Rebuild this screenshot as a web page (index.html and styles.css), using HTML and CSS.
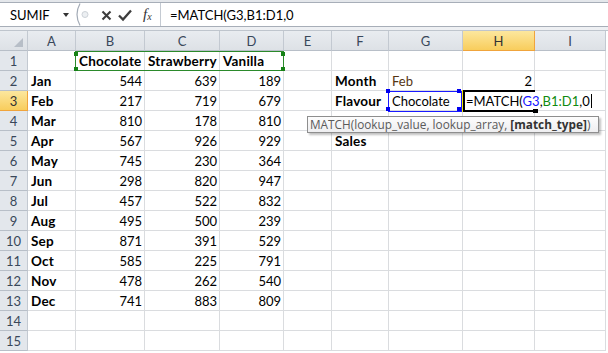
FILE: index.html
```html
<!DOCTYPE html>
<html lang="en">
<head>
  <meta charset="UTF-8" />
  <title>MATCH</title>
  <link rel="stylesheet" href="styles.css">
</head>
<body>
  <!-- Formula bar -->
  <div class="top">
    <div class="fbar">
      <div class="namebox">SUMIF<span class="dd"></span></div>
      <svg class="fbtns" width="86" height="23" viewBox="0 0 86 23">
        <path d="M6 0.5 Q0 11.5 6 22.5" fill="none" stroke="#a3abb6" stroke-width="1.2"></path>
        <circle cx="11" cy="11.5" r="3" fill="#eceff2" stroke="#cdd2d8"></circle>
        <path d="M28.5 8.5 L36.5 16.5 M36.5 8.5 L28.5 16.5" stroke="#3d3d3d" stroke-width="2.1" fill="none"></path>
        <path d="M45 12.5 L49 16.5 L57 7.5" stroke="#3d3d3d" stroke-width="2.3" fill="none"></path>
        <text x="69" y="16" class="fx">f<tspan class="fxs" dy="1">x</tspan></text>
      </svg>
      <div class="finput">=MATCH(G3,B1:D1,0</div>
    </div>
    <div class="gap"></div>
  </div>

  <!-- Sheet -->
  <div class="sheet">
    <div class="corner"></div>
    <div class="hd">A</div><div class="hd">B</div><div class="hd">C</div><div class="hd">D</div><div class="hd">E</div><div class="hd">F</div><div class="hd">G</div><div class="hd sel">H</div><div class="hd">I</div>

    <div class="rh">1</div><div class="c"></div><div class="c b">Chocolate</div><div class="c b">Strawberry</div><div class="c b">Vanilla</div><div class="c"></div><div class="c"></div><div class="c"></div><div class="c"></div><div class="c"></div>
    <div class="rh">2</div><div class="c b">Jan</div><div class="c n">544</div><div class="c n">639</div><div class="c n">189</div><div class="c"></div><div class="c b">Month</div><div class="c brown">Feb</div><div class="c n">2</div><div class="c"></div>
    <div class="rh sel">3</div><div class="c b">Feb</div><div class="c n">217</div><div class="c n">719</div><div class="c n">679</div><div class="c"></div><div class="c b">Flavour</div><div class="c">Chocolate</div><div class="c"></div><div class="c"></div>
    <div class="rh">4</div><div class="c b">Mar</div><div class="c n">810</div><div class="c n">178</div><div class="c n">810</div><div class="c"></div><div class="c"></div><div class="c"></div><div class="c"></div><div class="c"></div>
    <div class="rh">5</div><div class="c b">Apr</div><div class="c n">567</div><div class="c n">926</div><div class="c n">929</div><div class="c"></div><div class="c b">Sales</div><div class="c"></div><div class="c"></div><div class="c"></div>
    <div class="rh">6</div><div class="c b">May</div><div class="c n">745</div><div class="c n">230</div><div class="c n">364</div><div class="c"></div><div class="c"></div><div class="c"></div><div class="c"></div><div class="c"></div>
    <div class="rh">7</div><div class="c b">Jun</div><div class="c n">298</div><div class="c n">820</div><div class="c n">947</div><div class="c"></div><div class="c"></div><div class="c"></div><div class="c"></div><div class="c"></div>
    <div class="rh">8</div><div class="c b">Jul</div><div class="c n">457</div><div class="c n">522</div><div class="c n">832</div><div class="c"></div><div class="c"></div><div class="c"></div><div class="c"></div><div class="c"></div>
    <div class="rh">9</div><div class="c b">Aug</div><div class="c n">495</div><div class="c n">500</div><div class="c n">239</div><div class="c"></div><div class="c"></div><div class="c"></div><div class="c"></div><div class="c"></div>
    <div class="rh">10</div><div class="c b">Sep</div><div class="c n">871</div><div class="c n">391</div><div class="c n">529</div><div class="c"></div><div class="c"></div><div class="c"></div><div class="c"></div><div class="c"></div>
    <div class="rh">11</div><div class="c b">Oct</div><div class="c n">585</div><div class="c n">225</div><div class="c n">791</div><div class="c"></div><div class="c"></div><div class="c"></div><div class="c"></div><div class="c"></div>
    <div class="rh">12</div><div class="c b">Nov</div><div class="c n">478</div><div class="c n">262</div><div class="c n">540</div><div class="c"></div><div class="c"></div><div class="c"></div><div class="c"></div><div class="c"></div>
    <div class="rh">13</div><div class="c b">Dec</div><div class="c n">741</div><div class="c n">883</div><div class="c n">809</div><div class="c"></div><div class="c"></div><div class="c"></div><div class="c"></div><div class="c"></div>
    <div class="rh">14</div><div class="c"></div><div class="c"></div><div class="c"></div><div class="c"></div><div class="c"></div><div class="c"></div><div class="c"></div><div class="c"></div><div class="c"></div>
    <div class="rh">15</div><div class="c"></div><div class="c"></div><div class="c"></div><div class="c"></div><div class="c"></div><div class="c"></div><div class="c"></div><div class="c"></div><div class="c"></div>

    <!-- Range highlights and editing cell -->
    <div class="range green"></div>
    <div class="range blue"></div>
    <div class="edit">
      <span class="edit-text">=MATCH(<span class="ref-blue">G3</span>,<span class="ref-green">B1:D1</span>,0<span class="caret"></span></span>
    </div>

    <!-- Function tooltip -->
    <div class="tip">MATCH(lookup_value, lookup_array, <b>[match_type]</b>)</div>
  </div>
</body>
</html>
```

FILE: styles.css
```css
* {
  box-sizing: border-box;
}

body {
  margin: 0;
  width: 608px;
  height: 353px;
  overflow: hidden;
  background: #fff;
  font-family: Lato, "Liberation Sans", sans-serif;
  font-size: 13px;
  color: #000;
}

/* Formula bar */
.top {
  padding-top: 2px;
  background: #e4e7eb;
}

.fbar {
  display: flex;
  height: 25px;
  background: #fff;
  border-top: 1px solid #a7aeb8;
  border-bottom: 1px solid #a7aeb8;
}

.namebox {
  position: relative;
  width: 74px;
  padding-left: 10px;
  line-height: 23px;
  padding-top: 1px;
}

.dd {
  position: absolute;
  left: 63px;
  top: 10px;
  border-left: 3.5px solid transparent;
  border-right: 3.5px solid transparent;
  border-top: 4px solid #333;
}

.fbtns {
  flex: none;
}

.fx {
  font-family: "Liberation Serif", serif;
  font-style: italic;
  font-size: 15px;
  fill: #333;
}

.fxs {
  font-size: 10px;
}

.finput {
  flex: 1;
  border-left: 1px solid #c4cad2;
  padding-left: 9px;
  padding-top: 1px;
  line-height: 23px;
}

.gap {
  height: 4px;
  background: #eef0f3;
  border-bottom: 1px solid #bfc5cd;
}

/* Sheet grid */
.sheet {
  position: relative;
  display: grid;
  grid-template-columns: 28px 48px 69px 75px 64px 48px 57px 74px 72px 71px;
  grid-auto-rows: 20px;
}

.corner,
.hd,
.rh {
  background: linear-gradient(#e9ecf0, #dde1e6);
  border-right: 1px solid #c3c9d1;
  border-bottom: 1px solid #b8bfc8;
  color: #39475a;
  text-align: center;
  line-height: 21px;
}

.rh {
  background: #e3e7ec;
  line-height: 20px;
}

.corner {
  position: relative;
}

.corner::after {
  content: "";
  position: absolute;
  right: 4px;
  bottom: 3px;
  border-left: 9px solid transparent;
  border-bottom: 9px solid #b7bec7;
}

.hd.sel,
.rh.sel {
  background: linear-gradient(#fce79e, #f8cd5c);
  border-right-color: #f0a43c;
  border-bottom-color: #f0a43c;
  color: #333;
}

.c {
  border-right: 1px solid #dadcdf;
  border-bottom: 1px solid #dadcdf;
  padding: 0 2px 0 3px;
  line-height: 20px;
  white-space: nowrap;
}

.b {
  font-weight: bold;
  font-size: 13.5px;
  letter-spacing: 0.2px;
}

.n {
  text-align: right;
}

.brown {
  color: #553513;
}

/* Reference outlines */
.range {
  position: absolute;
  border: 1px solid;
}

.range::before {
  content: "";
  position: absolute;
  width: 4px;
  height: 4px;
}

.green {
  left: 75px;
  top: 20px;
  width: 209px;
  height: 20px;
  border-color: #2b8a2b;
}

.green::before {
  left: -2px;
  top: 0;
  background: #168216;
  box-shadow: 0 15px 0 #168216, 207px 0 0 #168216, 207px 15px 0 #168216;
}

.blue {
  left: 388px;
  top: 60px;
  width: 74px;
  height: 21px;
  border-color: #1a1aff;
}

.blue::before {
  left: -3px;
  top: -3px;
  background: #0000f0;
  box-shadow: 0 18px 0 #0000f0, 71px 0 0 #0000f0, 71px 18px 0 #0000f0;
}

/* Cell being edited */
.edit {
  position: absolute;
  left: 463px;
  top: 59px;
  width: 72px;
  height: 22px;
  border-top: 2px solid #000;
  border-bottom: 2px solid #000;
  border-left: 2px solid #000;
  box-shadow: -1px 0 0 #f2e600;
}

.edit::after {
  content: "";
  position: absolute;
  right: -3px;
  bottom: -3px;
  width: 5px;
  height: 4px;
  background: #000;
}

.edit-text {
  position: absolute;
  left: 0;
  top: 0;
  height: 18px;
  padding-left: 1px;
  padding-right: 3px;
  background: #fff;
  line-height: 18px;
  white-space: nowrap;
}

.ref-blue {
  color: #1616ff;
}

.ref-green {
  color: #0f8a0f;
}

.caret {
  display: inline-block;
  width: 1px;
  height: 14px;
  margin-left: 1px;
  vertical-align: -2px;
  background: #000;
}

/* Function tooltip */
.tip {
  position: absolute;
  left: 307px;
  top: 85px;
  width: 292px;
  height: 17px;
  padding-left: 2px;
  border: 1px solid #8e8e8e;
  background: linear-gradient(#fdfdfd, #eeeef0);
  box-shadow: 2px 2px 2px rgba(0, 0, 0, 0.25);
  font-family: "Open Sans", sans-serif;
  font-size: 11.8px;
  line-height: 15px;
  color: #5a5a5a;
  white-space: nowrap;
}

.tip b {
  color: #333;
}
```
